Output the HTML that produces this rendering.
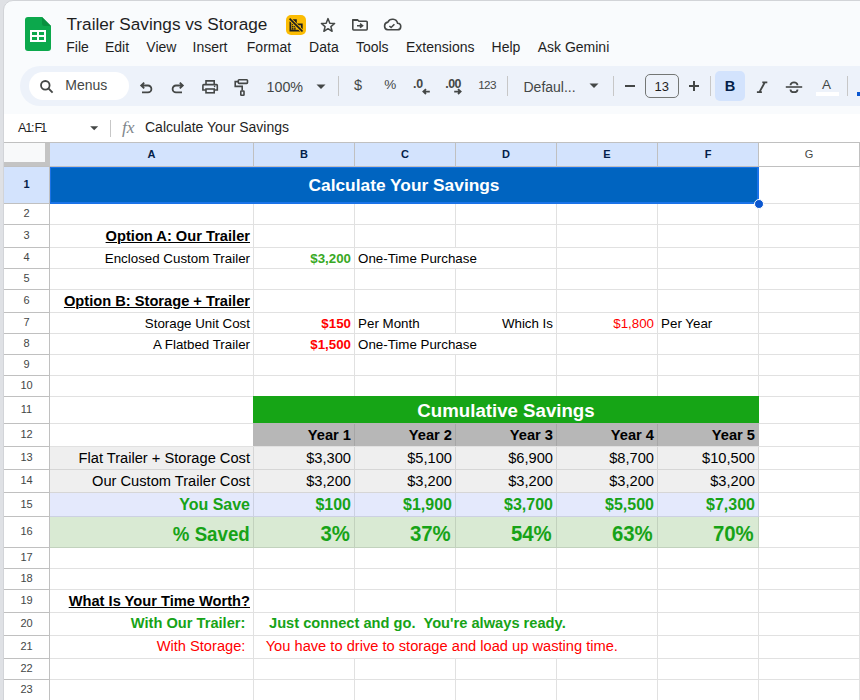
<!DOCTYPE html>
<html><head><meta charset="utf-8"><style>
html,body{margin:0;padding:0;}
body{width:860px;height:700px;overflow:hidden;position:relative;font-family:"Liberation Sans", sans-serif;}
body div{position:absolute;}
.t{white-space:pre;line-height:1;}
</style></head><body>
<div style="left:0px;top:0px;width:860px;height:700px;background:#dfe1e5;"></div><div style="left:3px;top:0px;width:900px;height:800px;background:#f9fbfd;box-sizing:border-box;border:1px solid #d2d4d8;border-top-left-radius:10px;"></div><svg style="position:absolute;left:25px;top:17px" width="26" height="34" viewBox="0 0 26 34"><path d="M3 0H17L26 9V31A3 3 0 0 1 23 34H3A3 3 0 0 1 0 31V3A3 3 0 0 1 3 0Z" fill="#0ca84c"/><path d="M17 0L26 9H19.5A2.5 2.5 0 0 1 17 6.5Z" fill="#08903f"/><rect x="5" y="13" width="16" height="12" fill="#fff"/><rect x="7" y="15" width="5" height="3" fill="#0ca84c"/><rect x="14" y="15" width="5" height="3" fill="#0ca84c"/><rect x="7" y="20" width="5" height="3" fill="#0ca84c"/><rect x="14" y="20" width="5" height="3" fill="#0ca84c"/></svg><div class="t" style="left:66.5px;top:16.17px;font-size:17.2px;color:#1f1f1f;font-weight:400;">Trailer Savings vs Storage</div><div class="t" style="left:66.3px;top:39.96px;font-size:14px;color:#1f1f1f;font-weight:400;">File</div><div class="t" style="left:105px;top:39.96px;font-size:14px;color:#1f1f1f;font-weight:400;">Edit</div><div class="t" style="left:146.3px;top:39.96px;font-size:14px;color:#1f1f1f;font-weight:400;">View</div><div class="t" style="left:192.5px;top:39.96px;font-size:14px;color:#1f1f1f;font-weight:400;">Insert</div><div class="t" style="left:246.8px;top:39.96px;font-size:14px;color:#1f1f1f;font-weight:400;">Format</div><div class="t" style="left:309.1px;top:39.96px;font-size:14px;color:#1f1f1f;font-weight:400;">Data</div><div class="t" style="left:355.9px;top:39.96px;font-size:14px;color:#1f1f1f;font-weight:400;">Tools</div><div class="t" style="left:406px;top:39.96px;font-size:14px;color:#1f1f1f;font-weight:400;">Extensions</div><div class="t" style="left:491.6px;top:39.96px;font-size:14px;color:#1f1f1f;font-weight:400;">Help</div><div class="t" style="left:537.7px;top:39.96px;font-size:14px;color:#1f1f1f;font-weight:400;">Ask Gemini</div><div style="left:286px;top:15px;width:20px;height:20px;background:#fbbc04;border-radius:5px;"></div><svg style="position:absolute;left:289px;top:18px" width="14" height="14" viewBox="0 0 14 14"><path d="M1.4 3.6V12.7H12.8V6.3H6.9V2.1H3.2" fill="none" stroke="#1f1f1f" stroke-width="1.8"/><g fill="#1f1f1f"><rect x="2.9" y="5.6" width="1.6" height="1.6"/><rect x="5.1" y="5.6" width="1.6" height="1.6"/><rect x="2.9" y="7.9" width="1.6" height="1.6"/><rect x="5.1" y="7.9" width="1.6" height="1.6"/><rect x="2.9" y="10.1" width="1.6" height="1.6"/><rect x="5.1" y="10.1" width="1.6" height="1.6"/><rect x="8.8" y="7.9" width="1.6" height="1.6"/></g><path d="M0.6 0.6L13.4 13.4" stroke="#fbbc04" stroke-width="3.4"/><path d="M0.6 0.6L13.4 13.4" stroke="#1f1f1f" stroke-width="1.7"/></svg><svg style="position:absolute;left:319px;top:16px" width="18" height="18" viewBox="0 0 18 18"><path d="M9 2.6L10.8 7.2L15.6 7.5L11.9 10.6L13.1 15.3L9 12.7L4.9 15.3L6.1 10.6L2.4 7.5L7.2 7.2Z" fill="none" stroke="#444746" stroke-width="1.5" stroke-linejoin="round"/></svg><svg style="position:absolute;left:351px;top:18px" width="18" height="14" viewBox="0 0 18 14"><path d="M1.8 1.8H6.5L8 3.3H15.3A0.9 0.9 0 0 1 16.2 4.2V11.1A0.9 0.9 0 0 1 15.3 12H2.7A0.9 0.9 0 0 1 1.8 11.1Z" fill="none" stroke="#444746" stroke-width="1.6" stroke-linejoin="round"/><path d="M1.8 1.5H6.6L8 3H1.8Z" fill="#444746"/><path d="M6 7.7H10.5M9 5.7L11.5 7.7L9 9.7" fill="none" stroke="#444746" stroke-width="1.6"/></svg><svg style="position:absolute;left:382px;top:17px" width="20" height="15" viewBox="0 0 20 15"><path d="M5.8 12.8H15.3A3.3 3.3 0 0 0 15.6 6.2A5.2 5.2 0 0 0 5.9 5.1A3.9 3.9 0 0 0 5.8 12.8Z" fill="none" stroke="#444746" stroke-width="1.6"/><path d="M7.4 9L9.1 10.5L12.4 7.2" fill="none" stroke="#444746" stroke-width="1.6"/></svg><div style="left:20px;top:66px;width:900px;height:40px;background:#edf2fa;border-radius:20px;"></div><div style="left:29px;top:72px;width:100px;height:28px;background:#ffffff;border-radius:14px;"></div><svg style="position:absolute;left:38px;top:78px" width="18" height="18" viewBox="0 0 18 18"><circle cx="7.3" cy="7.3" r="4.3" fill="none" stroke="#444746" stroke-width="1.8"/><path d="M10.4 10.4L14.6 14.6" stroke="#444746" stroke-width="1.9"/></svg><div class="t" style="left:65.3px;top:77.66px;font-size:14px;color:#444746;font-weight:400;">Menus</div><svg style="position:absolute;left:138px;top:80px" width="16" height="16" viewBox="0 0 16 16"><path d="M6.2 2.6L3.2 5.5L6.2 8.4M3.2 5.5H10A3.4 3.4 0 0 1 10 12.3H4" fill="none" stroke="#444746" stroke-width="1.8"/></svg><svg style="position:absolute;left:170px;top:80px" width="16" height="16" viewBox="0 0 16 16"><path d="M9.8 2.6L12.8 5.5L9.8 8.4M12.8 5.5H6A3.4 3.4 0 0 0 6 12.3H12" fill="none" stroke="#444746" stroke-width="1.8"/></svg><svg style="position:absolute;left:200px;top:78px" width="20" height="18" viewBox="0 0 20 18"><path d="M6 6.6V2.9H14.2V6.6" fill="none" stroke="#444746" stroke-width="1.6"/><path d="M6 12H2.9V7.4A0.8 0.8 0 0 1 3.7 6.6H16.5A0.8 0.8 0 0 1 17.3 7.4V12H14.2" fill="none" stroke="#444746" stroke-width="1.6"/><rect x="6" y="11" width="8.2" height="3.8" fill="none" stroke="#444746" stroke-width="1.6"/><circle cx="14.6" cy="8.4" r="0.8" fill="#444746"/></svg><svg style="position:absolute;left:232px;top:77px" width="18" height="20" viewBox="0 0 18 20"><rect x="6.3" y="2.8" width="9.2" height="3.6" rx="0.8" fill="none" stroke="#444746" stroke-width="1.6"/><path d="M6.3 4.6H3.2V9.4H10.2V13.4" fill="none" stroke="#444746" stroke-width="1.6"/><rect x="8.8" y="14" width="3.2" height="4.3" rx="0.6" fill="none" stroke="#444746" stroke-width="1.6"/></svg><div class="t" style="left:266.5px;top:80.42px;font-size:14.3px;color:#444746;font-weight:400;">100%</div><svg style="position:absolute;left:316px;top:84px" width="10" height="6" viewBox="0 0 10 6"><path d="M0.5 0.5H9.5L5 5Z" fill="#444746"/></svg><div style="left:338px;top:76px;width:1px;height:20px;background:#c7c7c7;"></div><div class="t" style="left:354px;top:78.45px;font-size:14.5px;color:#444746;font-weight:400;">$</div><div class="t" style="left:384.3px;top:78.06px;font-size:13.5px;color:#444746;font-weight:400;">%</div><div class="t" style="left:413px;top:78.16px;font-size:12.4px;color:#444746;font-weight:700;letter-spacing:-0.2px;">.0</div><svg style="position:absolute;left:421px;top:88px" width="10" height="7" viewBox="0 0 10 7"><path d="M8.8 3.6H3M5 1.2L2.4 3.6L5 6" fill="none" stroke="#444746" stroke-width="1.8"/></svg><div class="t" style="left:445.3px;top:78.16px;font-size:12.4px;color:#444746;font-weight:700;letter-spacing:-0.6px;">.00</div><svg style="position:absolute;left:453px;top:88px" width="10" height="7" viewBox="0 0 10 7"><path d="M1.2 3.6H7M5 1.2L7.6 3.6L5 6" fill="none" stroke="#444746" stroke-width="1.8"/></svg><div class="t" style="left:478.3px;top:79.12px;font-size:11.7px;color:#444746;font-weight:400;letter-spacing:-0.7px;">123</div><div style="left:507px;top:76px;width:1px;height:20px;background:#c7c7c7;"></div><div class="t" style="left:523.5px;top:79.66px;font-size:14px;color:#444746;font-weight:400;">Defaul...</div><svg style="position:absolute;left:589px;top:83px" width="10" height="6" viewBox="0 0 10 6"><path d="M0.5 0.5H9.5L5 5Z" fill="#444746"/></svg><div style="left:613px;top:76px;width:1px;height:20px;background:#c7c7c7;"></div><div style="left:625px;top:85px;width:10px;height:1.8px;background:#444746;"></div><div style="left:645px;top:74px;width:34px;height:24px;background:transparent;box-sizing:border-box;border:1.3px solid #747775;border-radius:5px;"></div><div class="t" style="left:61.799999999999955px;width:1200px;text-align:center;top:80.07px;font-size:13px;color:#1f1f1f;font-weight:400;">13</div><div style="left:688.8px;top:85.2px;width:10.2px;height:1.8px;background:#444746;"></div><div style="left:693px;top:81px;width:1.8px;height:10.2px;background:#444746;"></div><div style="left:710px;top:76px;width:1px;height:20px;background:#c7c7c7;"></div><div style="left:715px;top:71px;width:30px;height:30px;background:#d3e3fd;border-radius:5px;"></div><div class="t" style="left:130px;width:1200px;text-align:center;top:79.37px;font-size:14.6px;color:#041e49;font-weight:700;">B</div><svg style="position:absolute;left:755px;top:80px" width="14" height="14" viewBox="0 0 14 14"><path d="M7.3 2.4H12.3M1.9 12.1H6.9M9.8 2.4L4.4 12.1" fill="none" stroke="#444746" stroke-width="1.9"/></svg><svg style="position:absolute;left:784px;top:79.5px" width="20" height="15" viewBox="0 0 20 15"><path d="M1.8 7H18.2" stroke="#444746" stroke-width="1.6"/><path d="M6.5 5.3A3.5 3 0 0 1 13.5 5.3" fill="none" stroke="#444746" stroke-width="1.8"/><path d="M6.5 9.4A3.5 2.8 0 0 0 13.5 9.4" fill="none" stroke="#444746" stroke-width="1.8"/></svg><div class="t" style="left:226.5px;width:1200px;text-align:center;top:78.06px;font-size:13.5px;color:#444746;font-weight:400;">A</div><div style="left:816px;top:92px;width:23px;height:4px;background:#ffffff;"></div><div style="left:847px;top:76px;width:1px;height:20px;background:#c7c7c7;"></div><div style="left:857px;top:92px;width:3px;height:4px;background:#0b57d0;"></div><div style="left:4px;top:114px;width:856px;height:28px;background:#ffffff;"></div><div class="t" style="left:18.1px;top:121.59px;font-size:12.6px;color:#1f1f1f;font-weight:400;">A</div><div class="t" style="left:25.2px;top:121.59px;font-size:12.6px;color:#1f1f1f;font-weight:400;">1</div><div class="t" style="left:30.9px;top:121.59px;font-size:12.6px;color:#1f1f1f;font-weight:400;">:</div><div class="t" style="left:34.6px;top:121.59px;font-size:12.6px;color:#1f1f1f;font-weight:400;">F</div><div class="t" style="left:40.2px;top:121.59px;font-size:12.6px;color:#1f1f1f;font-weight:400;">1</div><svg style="position:absolute;left:90px;top:126px" width="9" height="5" viewBox="0 0 9 5"><path d="M0.2 0.2H8.2L4.2 4.2Z" fill="#444746"/></svg><div style="left:110px;top:120px;width:1px;height:17px;background:#c7c7c7;"></div><div class="t" style="left:122px;top:119.13px;font-size:17.5px;color:#80868b;font-weight:400;font-family:'Liberation Serif',serif;letter-spacing:0px;"><i>fx</i></div><div class="t" style="left:145px;top:120.46px;font-size:14px;color:#1f1f1f;font-weight:400;">Calculate Your Savings</div><div style="left:4px;top:142px;width:856px;height:558px;background:#ffffff;"></div><div style="left:4px;top:142px;width:856px;height:1px;background:#c0c0c0;"></div><div style="left:50px;top:143px;width:708px;height:23px;background:#d3e3fd;"></div><div style="left:4px;top:143px;width:41px;height:19px;background:#f8f9fa;"></div><div style="left:45px;top:143px;width:5px;height:24px;background:#c4c4c4;"></div><div style="left:4px;top:162px;width:45px;height:5px;background:#c4c4c4;"></div><div style="left:4px;top:166px;width:856px;height:1px;background:#c0c0c0;"></div><div class="t" style="left:-448.5px;width:1200px;text-align:center;top:149.09px;font-size:11px;color:#041e49;font-weight:700;">A</div><div class="t" style="left:-296.0px;width:1200px;text-align:center;top:149.09px;font-size:11px;color:#041e49;font-weight:700;">B</div><div class="t" style="left:-195.0px;width:1200px;text-align:center;top:149.09px;font-size:11px;color:#041e49;font-weight:700;">C</div><div class="t" style="left:-94.0px;width:1200px;text-align:center;top:149.09px;font-size:11px;color:#041e49;font-weight:700;">D</div><div class="t" style="left:7.0px;width:1200px;text-align:center;top:149.09px;font-size:11px;color:#041e49;font-weight:700;">E</div><div class="t" style="left:108.0px;width:1200px;text-align:center;top:149.09px;font-size:11px;color:#041e49;font-weight:700;">F</div><div class="t" style="left:209.0px;width:1200px;text-align:center;top:149.09px;font-size:11px;color:#444746;font-weight:400;">G</div><div style="left:253px;top:143px;width:1px;height:23px;background:#c0c0c0;"></div><div style="left:354px;top:143px;width:1px;height:23px;background:#c0c0c0;"></div><div style="left:455px;top:143px;width:1px;height:23px;background:#c0c0c0;"></div><div style="left:556px;top:143px;width:1px;height:23px;background:#c0c0c0;"></div><div style="left:657px;top:143px;width:1px;height:23px;background:#c0c0c0;"></div><div style="left:758px;top:143px;width:1px;height:23px;background:#c0c0c0;"></div><div style="left:859px;top:143px;width:1px;height:23px;background:#c0c0c0;"></div><div style="left:4px;top:167px;width:45px;height:36px;background:#d3e3fd;"></div><div style="left:49px;top:167px;width:1px;height:533px;background:#c0c0c0;"></div><div style="left:4px;top:203px;width:45px;height:1px;background:#c0c0c0;"></div><div class="t" style="left:-573.5px;width:1200px;text-align:center;top:179.39px;font-size:11px;color:#041e49;font-weight:700;">1</div><div style="left:4px;top:224px;width:45px;height:1px;background:#c0c0c0;"></div><div class="t" style="left:-573.5px;width:1200px;text-align:center;top:208.39px;font-size:11px;color:#444746;font-weight:400;">2</div><div style="left:4px;top:247px;width:45px;height:1px;background:#c0c0c0;"></div><div class="t" style="left:-573.5px;width:1200px;text-align:center;top:230.39px;font-size:11px;color:#444746;font-weight:400;">3</div><div style="left:4px;top:268px;width:45px;height:1px;background:#c0c0c0;"></div><div class="t" style="left:-573.5px;width:1200px;text-align:center;top:252.39px;font-size:11px;color:#444746;font-weight:400;">4</div><div style="left:4px;top:289px;width:45px;height:1px;background:#c0c0c0;"></div><div class="t" style="left:-573.5px;width:1200px;text-align:center;top:273.39px;font-size:11px;color:#444746;font-weight:400;">5</div><div style="left:4px;top:312px;width:45px;height:1px;background:#c0c0c0;"></div><div class="t" style="left:-573.5px;width:1200px;text-align:center;top:295.39px;font-size:11px;color:#444746;font-weight:400;">6</div><div style="left:4px;top:333px;width:45px;height:1px;background:#c0c0c0;"></div><div class="t" style="left:-573.5px;width:1200px;text-align:center;top:317.39px;font-size:11px;color:#444746;font-weight:400;">7</div><div style="left:4px;top:354px;width:45px;height:1px;background:#c0c0c0;"></div><div class="t" style="left:-573.5px;width:1200px;text-align:center;top:338.39px;font-size:11px;color:#444746;font-weight:400;">8</div><div style="left:4px;top:375px;width:45px;height:1px;background:#c0c0c0;"></div><div class="t" style="left:-573.5px;width:1200px;text-align:center;top:359.39px;font-size:11px;color:#444746;font-weight:400;">9</div><div style="left:4px;top:396px;width:45px;height:1px;background:#c0c0c0;"></div><div class="t" style="left:-573.5px;width:1200px;text-align:center;top:380.39px;font-size:11px;color:#444746;font-weight:400;">10</div><div style="left:4px;top:423px;width:45px;height:1px;background:#c0c0c0;"></div><div class="t" style="left:-573.5px;width:1200px;text-align:center;top:404.39px;font-size:11px;color:#444746;font-weight:400;">11</div><div style="left:4px;top:446px;width:45px;height:1px;background:#c0c0c0;"></div><div class="t" style="left:-573.5px;width:1200px;text-align:center;top:429.39px;font-size:11px;color:#444746;font-weight:400;">12</div><div style="left:4px;top:469px;width:45px;height:1px;background:#c0c0c0;"></div><div class="t" style="left:-573.5px;width:1200px;text-align:center;top:452.39px;font-size:11px;color:#444746;font-weight:400;">13</div><div style="left:4px;top:492px;width:45px;height:1px;background:#c0c0c0;"></div><div class="t" style="left:-573.5px;width:1200px;text-align:center;top:475.39px;font-size:11px;color:#444746;font-weight:400;">14</div><div style="left:4px;top:516px;width:45px;height:1px;background:#c0c0c0;"></div><div class="t" style="left:-573.5px;width:1200px;text-align:center;top:498.89px;font-size:11px;color:#444746;font-weight:400;">15</div><div style="left:4px;top:547px;width:45px;height:1px;background:#c0c0c0;"></div><div class="t" style="left:-573.5px;width:1200px;text-align:center;top:526.39px;font-size:11px;color:#444746;font-weight:400;">16</div><div style="left:4px;top:568px;width:45px;height:1px;background:#c0c0c0;"></div><div class="t" style="left:-573.5px;width:1200px;text-align:center;top:552.39px;font-size:11px;color:#444746;font-weight:400;">17</div><div style="left:4px;top:589px;width:45px;height:1px;background:#c0c0c0;"></div><div class="t" style="left:-573.5px;width:1200px;text-align:center;top:573.39px;font-size:11px;color:#444746;font-weight:400;">18</div><div style="left:4px;top:612px;width:45px;height:1px;background:#c0c0c0;"></div><div class="t" style="left:-573.5px;width:1200px;text-align:center;top:595.39px;font-size:11px;color:#444746;font-weight:400;">19</div><div style="left:4px;top:635px;width:45px;height:1px;background:#c0c0c0;"></div><div class="t" style="left:-573.5px;width:1200px;text-align:center;top:618.39px;font-size:11px;color:#444746;font-weight:400;">20</div><div style="left:4px;top:658px;width:45px;height:1px;background:#c0c0c0;"></div><div class="t" style="left:-573.5px;width:1200px;text-align:center;top:641.39px;font-size:11px;color:#444746;font-weight:400;">21</div><div style="left:4px;top:679px;width:45px;height:1px;background:#c0c0c0;"></div><div class="t" style="left:-573.5px;width:1200px;text-align:center;top:663.39px;font-size:11px;color:#444746;font-weight:400;">22</div><div style="left:4px;top:700px;width:45px;height:1px;background:#c0c0c0;"></div><div class="t" style="left:-573.5px;width:1200px;text-align:center;top:684.39px;font-size:11px;color:#444746;font-weight:400;">23</div><div style="left:50px;top:167px;width:708px;height:36px;background:#0064c0;"></div><div style="left:253px;top:396px;width:506px;height:27px;background:#16a516;"></div><div style="left:253px;top:423px;width:506px;height:23px;background:#b7b7b7;"></div><div style="left:50px;top:447px;width:709px;height:23px;background:#efefef;"></div><div style="left:50px;top:470px;width:709px;height:23px;background:#efefef;"></div><div style="left:50px;top:493px;width:709px;height:24px;background:#e4e9fc;"></div><div style="left:50px;top:517px;width:709px;height:31px;background:#d9ead3;"></div><div style="left:758px;top:203px;width:102px;height:1px;background:#e1e1e1;"></div><div style="left:50px;top:224px;width:810px;height:1px;background:#e1e1e1;"></div><div style="left:50px;top:247px;width:810px;height:1px;background:#e1e1e1;"></div><div style="left:50px;top:268px;width:810px;height:1px;background:#e1e1e1;"></div><div style="left:50px;top:289px;width:810px;height:1px;background:#e1e1e1;"></div><div style="left:50px;top:312px;width:810px;height:1px;background:#e1e1e1;"></div><div style="left:50px;top:333px;width:810px;height:1px;background:#e1e1e1;"></div><div style="left:50px;top:354px;width:810px;height:1px;background:#e1e1e1;"></div><div style="left:50px;top:375px;width:810px;height:1px;background:#e1e1e1;"></div><div style="left:50px;top:396px;width:203px;height:1px;background:#e1e1e1;"></div><div style="left:759px;top:396px;width:101px;height:1px;background:#e1e1e1;"></div><div style="left:50px;top:423px;width:203px;height:1px;background:#e1e1e1;"></div><div style="left:759px;top:423px;width:101px;height:1px;background:#e1e1e1;"></div><div style="left:50px;top:446px;width:709px;height:1px;background:#e1e1e1;"></div><div style="left:759px;top:446px;width:101px;height:1px;background:#e1e1e1;"></div><div style="left:50px;top:469px;width:709px;height:1px;background:rgba(0,0,0,0.1);"></div><div style="left:759px;top:469px;width:101px;height:1px;background:#e1e1e1;"></div><div style="left:50px;top:492px;width:709px;height:1px;background:rgba(0,0,0,0.1);"></div><div style="left:759px;top:492px;width:101px;height:1px;background:#e1e1e1;"></div><div style="left:50px;top:516px;width:709px;height:1px;background:rgba(0,0,0,0.1);"></div><div style="left:759px;top:516px;width:101px;height:1px;background:#e1e1e1;"></div><div style="left:50px;top:547px;width:709px;height:1px;background:rgba(0,0,0,0.1);"></div><div style="left:759px;top:547px;width:101px;height:1px;background:#e1e1e1;"></div><div style="left:50px;top:568px;width:810px;height:1px;background:#e1e1e1;"></div><div style="left:50px;top:589px;width:810px;height:1px;background:#e1e1e1;"></div><div style="left:50px;top:612px;width:810px;height:1px;background:#e1e1e1;"></div><div style="left:50px;top:635px;width:810px;height:1px;background:#e1e1e1;"></div><div style="left:50px;top:658px;width:810px;height:1px;background:#e1e1e1;"></div><div style="left:50px;top:679px;width:810px;height:1px;background:#e1e1e1;"></div><div style="left:859px;top:167px;width:1px;height:36px;background:#e1e1e1;"></div><div style="left:253px;top:204px;width:1px;height:20px;background:#e1e1e1;"></div><div style="left:354px;top:204px;width:1px;height:20px;background:#e1e1e1;"></div><div style="left:455px;top:204px;width:1px;height:20px;background:#e1e1e1;"></div><div style="left:556px;top:204px;width:1px;height:20px;background:#e1e1e1;"></div><div style="left:657px;top:204px;width:1px;height:20px;background:#e1e1e1;"></div><div style="left:758px;top:204px;width:1px;height:20px;background:#e1e1e1;"></div><div style="left:859px;top:204px;width:1px;height:20px;background:#e1e1e1;"></div><div style="left:253px;top:225px;width:1px;height:22px;background:#e1e1e1;"></div><div style="left:354px;top:225px;width:1px;height:22px;background:#e1e1e1;"></div><div style="left:455px;top:225px;width:1px;height:22px;background:#e1e1e1;"></div><div style="left:556px;top:225px;width:1px;height:22px;background:#e1e1e1;"></div><div style="left:657px;top:225px;width:1px;height:22px;background:#e1e1e1;"></div><div style="left:758px;top:225px;width:1px;height:22px;background:#e1e1e1;"></div><div style="left:859px;top:225px;width:1px;height:22px;background:#e1e1e1;"></div><div style="left:253px;top:248px;width:1px;height:20px;background:#e1e1e1;"></div><div style="left:354px;top:248px;width:1px;height:20px;background:#e1e1e1;"></div><div style="left:556px;top:248px;width:1px;height:20px;background:#e1e1e1;"></div><div style="left:657px;top:248px;width:1px;height:20px;background:#e1e1e1;"></div><div style="left:758px;top:248px;width:1px;height:20px;background:#e1e1e1;"></div><div style="left:859px;top:248px;width:1px;height:20px;background:#e1e1e1;"></div><div style="left:253px;top:269px;width:1px;height:20px;background:#e1e1e1;"></div><div style="left:354px;top:269px;width:1px;height:20px;background:#e1e1e1;"></div><div style="left:455px;top:269px;width:1px;height:20px;background:#e1e1e1;"></div><div style="left:556px;top:269px;width:1px;height:20px;background:#e1e1e1;"></div><div style="left:657px;top:269px;width:1px;height:20px;background:#e1e1e1;"></div><div style="left:758px;top:269px;width:1px;height:20px;background:#e1e1e1;"></div><div style="left:859px;top:269px;width:1px;height:20px;background:#e1e1e1;"></div><div style="left:253px;top:290px;width:1px;height:22px;background:#e1e1e1;"></div><div style="left:354px;top:290px;width:1px;height:22px;background:#e1e1e1;"></div><div style="left:455px;top:290px;width:1px;height:22px;background:#e1e1e1;"></div><div style="left:556px;top:290px;width:1px;height:22px;background:#e1e1e1;"></div><div style="left:657px;top:290px;width:1px;height:22px;background:#e1e1e1;"></div><div style="left:758px;top:290px;width:1px;height:22px;background:#e1e1e1;"></div><div style="left:859px;top:290px;width:1px;height:22px;background:#e1e1e1;"></div><div style="left:253px;top:313px;width:1px;height:20px;background:#e1e1e1;"></div><div style="left:354px;top:313px;width:1px;height:20px;background:#e1e1e1;"></div><div style="left:455px;top:313px;width:1px;height:20px;background:#e1e1e1;"></div><div style="left:556px;top:313px;width:1px;height:20px;background:#e1e1e1;"></div><div style="left:657px;top:313px;width:1px;height:20px;background:#e1e1e1;"></div><div style="left:758px;top:313px;width:1px;height:20px;background:#e1e1e1;"></div><div style="left:859px;top:313px;width:1px;height:20px;background:#e1e1e1;"></div><div style="left:253px;top:334px;width:1px;height:20px;background:#e1e1e1;"></div><div style="left:354px;top:334px;width:1px;height:20px;background:#e1e1e1;"></div><div style="left:556px;top:334px;width:1px;height:20px;background:#e1e1e1;"></div><div style="left:657px;top:334px;width:1px;height:20px;background:#e1e1e1;"></div><div style="left:758px;top:334px;width:1px;height:20px;background:#e1e1e1;"></div><div style="left:859px;top:334px;width:1px;height:20px;background:#e1e1e1;"></div><div style="left:253px;top:355px;width:1px;height:20px;background:#e1e1e1;"></div><div style="left:354px;top:355px;width:1px;height:20px;background:#e1e1e1;"></div><div style="left:455px;top:355px;width:1px;height:20px;background:#e1e1e1;"></div><div style="left:556px;top:355px;width:1px;height:20px;background:#e1e1e1;"></div><div style="left:657px;top:355px;width:1px;height:20px;background:#e1e1e1;"></div><div style="left:758px;top:355px;width:1px;height:20px;background:#e1e1e1;"></div><div style="left:859px;top:355px;width:1px;height:20px;background:#e1e1e1;"></div><div style="left:253px;top:376px;width:1px;height:20px;background:#e1e1e1;"></div><div style="left:354px;top:376px;width:1px;height:20px;background:#e1e1e1;"></div><div style="left:455px;top:376px;width:1px;height:20px;background:#e1e1e1;"></div><div style="left:556px;top:376px;width:1px;height:20px;background:#e1e1e1;"></div><div style="left:657px;top:376px;width:1px;height:20px;background:#e1e1e1;"></div><div style="left:758px;top:376px;width:1px;height:20px;background:#e1e1e1;"></div><div style="left:859px;top:376px;width:1px;height:20px;background:#e1e1e1;"></div><div style="left:859px;top:397px;width:1px;height:26px;background:#e1e1e1;"></div><div style="left:354px;top:424px;width:1px;height:22px;background:rgba(0,0,0,0.09);"></div><div style="left:455px;top:424px;width:1px;height:22px;background:rgba(0,0,0,0.09);"></div><div style="left:556px;top:424px;width:1px;height:22px;background:rgba(0,0,0,0.09);"></div><div style="left:657px;top:424px;width:1px;height:22px;background:rgba(0,0,0,0.09);"></div><div style="left:859px;top:424px;width:1px;height:22px;background:rgba(0,0,0,0.09);"></div><div style="left:253px;top:447px;width:1px;height:22px;background:rgba(0,0,0,0.1);"></div><div style="left:354px;top:447px;width:1px;height:22px;background:rgba(0,0,0,0.1);"></div><div style="left:455px;top:447px;width:1px;height:22px;background:rgba(0,0,0,0.1);"></div><div style="left:556px;top:447px;width:1px;height:22px;background:rgba(0,0,0,0.1);"></div><div style="left:657px;top:447px;width:1px;height:22px;background:rgba(0,0,0,0.1);"></div><div style="left:758px;top:447px;width:1px;height:22px;background:rgba(0,0,0,0.1);"></div><div style="left:859px;top:447px;width:1px;height:22px;background:#e1e1e1;"></div><div style="left:253px;top:470px;width:1px;height:22px;background:rgba(0,0,0,0.1);"></div><div style="left:354px;top:470px;width:1px;height:22px;background:rgba(0,0,0,0.1);"></div><div style="left:455px;top:470px;width:1px;height:22px;background:rgba(0,0,0,0.1);"></div><div style="left:556px;top:470px;width:1px;height:22px;background:rgba(0,0,0,0.1);"></div><div style="left:657px;top:470px;width:1px;height:22px;background:rgba(0,0,0,0.1);"></div><div style="left:758px;top:470px;width:1px;height:22px;background:rgba(0,0,0,0.1);"></div><div style="left:859px;top:470px;width:1px;height:22px;background:#e1e1e1;"></div><div style="left:253px;top:493px;width:1px;height:23px;background:rgba(0,0,0,0.1);"></div><div style="left:354px;top:493px;width:1px;height:23px;background:rgba(0,0,0,0.1);"></div><div style="left:455px;top:493px;width:1px;height:23px;background:rgba(0,0,0,0.1);"></div><div style="left:556px;top:493px;width:1px;height:23px;background:rgba(0,0,0,0.1);"></div><div style="left:657px;top:493px;width:1px;height:23px;background:rgba(0,0,0,0.1);"></div><div style="left:758px;top:493px;width:1px;height:23px;background:rgba(0,0,0,0.1);"></div><div style="left:859px;top:493px;width:1px;height:23px;background:#e1e1e1;"></div><div style="left:253px;top:517px;width:1px;height:30px;background:rgba(0,0,0,0.1);"></div><div style="left:354px;top:517px;width:1px;height:30px;background:rgba(0,0,0,0.1);"></div><div style="left:455px;top:517px;width:1px;height:30px;background:rgba(0,0,0,0.1);"></div><div style="left:556px;top:517px;width:1px;height:30px;background:rgba(0,0,0,0.1);"></div><div style="left:657px;top:517px;width:1px;height:30px;background:rgba(0,0,0,0.1);"></div><div style="left:758px;top:517px;width:1px;height:30px;background:rgba(0,0,0,0.1);"></div><div style="left:859px;top:517px;width:1px;height:30px;background:#e1e1e1;"></div><div style="left:253px;top:548px;width:1px;height:20px;background:#e1e1e1;"></div><div style="left:354px;top:548px;width:1px;height:20px;background:#e1e1e1;"></div><div style="left:455px;top:548px;width:1px;height:20px;background:#e1e1e1;"></div><div style="left:556px;top:548px;width:1px;height:20px;background:#e1e1e1;"></div><div style="left:657px;top:548px;width:1px;height:20px;background:#e1e1e1;"></div><div style="left:758px;top:548px;width:1px;height:20px;background:#e1e1e1;"></div><div style="left:859px;top:548px;width:1px;height:20px;background:#e1e1e1;"></div><div style="left:253px;top:569px;width:1px;height:20px;background:#e1e1e1;"></div><div style="left:354px;top:569px;width:1px;height:20px;background:#e1e1e1;"></div><div style="left:455px;top:569px;width:1px;height:20px;background:#e1e1e1;"></div><div style="left:556px;top:569px;width:1px;height:20px;background:#e1e1e1;"></div><div style="left:657px;top:569px;width:1px;height:20px;background:#e1e1e1;"></div><div style="left:758px;top:569px;width:1px;height:20px;background:#e1e1e1;"></div><div style="left:859px;top:569px;width:1px;height:20px;background:#e1e1e1;"></div><div style="left:253px;top:590px;width:1px;height:22px;background:#e1e1e1;"></div><div style="left:354px;top:590px;width:1px;height:22px;background:#e1e1e1;"></div><div style="left:455px;top:590px;width:1px;height:22px;background:#e1e1e1;"></div><div style="left:556px;top:590px;width:1px;height:22px;background:#e1e1e1;"></div><div style="left:657px;top:590px;width:1px;height:22px;background:#e1e1e1;"></div><div style="left:758px;top:590px;width:1px;height:22px;background:#e1e1e1;"></div><div style="left:859px;top:590px;width:1px;height:22px;background:#e1e1e1;"></div><div style="left:253px;top:613px;width:1px;height:22px;background:#e1e1e1;"></div><div style="left:657px;top:613px;width:1px;height:22px;background:#e1e1e1;"></div><div style="left:758px;top:613px;width:1px;height:22px;background:#e1e1e1;"></div><div style="left:859px;top:613px;width:1px;height:22px;background:#e1e1e1;"></div><div style="left:253px;top:636px;width:1px;height:22px;background:#e1e1e1;"></div><div style="left:657px;top:636px;width:1px;height:22px;background:#e1e1e1;"></div><div style="left:758px;top:636px;width:1px;height:22px;background:#e1e1e1;"></div><div style="left:859px;top:636px;width:1px;height:22px;background:#e1e1e1;"></div><div style="left:253px;top:659px;width:1px;height:20px;background:#e1e1e1;"></div><div style="left:354px;top:659px;width:1px;height:20px;background:#e1e1e1;"></div><div style="left:455px;top:659px;width:1px;height:20px;background:#e1e1e1;"></div><div style="left:556px;top:659px;width:1px;height:20px;background:#e1e1e1;"></div><div style="left:657px;top:659px;width:1px;height:20px;background:#e1e1e1;"></div><div style="left:758px;top:659px;width:1px;height:20px;background:#e1e1e1;"></div><div style="left:859px;top:659px;width:1px;height:20px;background:#e1e1e1;"></div><div style="left:253px;top:680px;width:1px;height:20px;background:#e1e1e1;"></div><div style="left:354px;top:680px;width:1px;height:20px;background:#e1e1e1;"></div><div style="left:455px;top:680px;width:1px;height:20px;background:#e1e1e1;"></div><div style="left:556px;top:680px;width:1px;height:20px;background:#e1e1e1;"></div><div style="left:657px;top:680px;width:1px;height:20px;background:#e1e1e1;"></div><div style="left:758px;top:680px;width:1px;height:20px;background:#e1e1e1;"></div><div style="left:859px;top:680px;width:1px;height:20px;background:#e1e1e1;"></div><div class="t" style="left:-196px;width:1200px;text-align:center;top:176.96px;font-size:17.33px;color:#ffffff;font-weight:700;">Calculate Your Savings</div><div class="t" style="right:610px;text-align:right;top:229.02px;font-size:14.67px;color:#000000;font-weight:700;text-decoration:underline;text-decoration-thickness:1.2px;text-underline-offset:0.9px;">Option A: Our Trailer</div><div class="t" style="right:610px;text-align:right;top:251.9px;font-size:13.33px;color:#000000;font-weight:400;">Enclosed Custom Trailer</div><div class="t" style="right:509px;text-align:right;top:251.9px;font-size:13.33px;color:#38a824;font-weight:700;">$3,200</div><div class="t" style="left:358.1px;top:251.9px;font-size:13.33px;color:#000000;font-weight:400;">One-Time Purchase</div><div class="t" style="right:610px;text-align:right;top:294.02px;font-size:14.67px;color:#000000;font-weight:700;text-decoration:underline;text-decoration-thickness:1.2px;text-underline-offset:0.9px;">Option B: Storage + Trailer</div><div class="t" style="right:610px;text-align:right;top:316.7px;font-size:13.33px;color:#000000;font-weight:400;">Storage Unit Cost</div><div class="t" style="right:509px;text-align:right;top:316.7px;font-size:13.33px;color:#ff0000;font-weight:700;">$150</div><div class="t" style="left:358.1px;top:316.7px;font-size:13.33px;color:#000000;font-weight:400;">Per Month</div><div class="t" style="right:307px;text-align:right;top:316.7px;font-size:13.33px;color:#000000;font-weight:400;">Which Is</div><div class="t" style="right:206px;text-align:right;top:316.7px;font-size:13.33px;color:#ff0000;font-weight:400;">$1,800</div><div class="t" style="left:661.1px;top:316.7px;font-size:13.33px;color:#000000;font-weight:400;">Per Year</div><div class="t" style="right:610px;text-align:right;top:337.7px;font-size:13.33px;color:#000000;font-weight:400;">A Flatbed Trailer</div><div class="t" style="right:509px;text-align:right;top:337.7px;font-size:13.33px;color:#ff0000;font-weight:700;">$1,500</div><div class="t" style="left:358.1px;top:337.7px;font-size:13.33px;color:#000000;font-weight:400;">One-Time Purchase</div><div class="t" style="left:-94px;width:1200px;text-align:center;top:401.58px;font-size:18.67px;color:#ffffff;font-weight:700;">Cumulative Savings</div><div class="t" style="right:509px;text-align:right;top:427.62px;font-size:14.67px;color:#000000;font-weight:700;">Year 1</div><div class="t" style="right:408px;text-align:right;top:427.62px;font-size:14.67px;color:#000000;font-weight:700;">Year 2</div><div class="t" style="right:307px;text-align:right;top:427.62px;font-size:14.67px;color:#000000;font-weight:700;">Year 3</div><div class="t" style="right:206px;text-align:right;top:427.62px;font-size:14.67px;color:#000000;font-weight:700;">Year 4</div><div class="t" style="right:105px;text-align:right;top:427.62px;font-size:14.67px;color:#000000;font-weight:700;">Year 5</div><div class="t" style="right:610px;text-align:right;top:450.82px;font-size:14.67px;color:#000000;font-weight:400;">Flat Trailer + Storage Cost</div><div class="t" style="right:610px;text-align:right;top:473.82px;font-size:14.67px;color:#000000;font-weight:400;">Our Custom Trailer Cost</div><div class="t" style="right:610px;text-align:right;top:496.84px;font-size:16px;color:#17a317;font-weight:700;">You Save</div><div class="t" style="right:610px;text-align:right;top:525.49px;font-size:19.4px;color:#17a317;font-weight:700;transform:scaleX(0.965);transform-origin:100% 0;">% Saved</div><div class="t" style="right:509px;text-align:right;top:450.82px;font-size:14.67px;color:#000000;font-weight:400;">$3,300</div><div class="t" style="right:509px;text-align:right;top:473.82px;font-size:14.67px;color:#000000;font-weight:400;">$3,200</div><div class="t" style="right:509px;text-align:right;top:496.84px;font-size:16px;color:#17a317;font-weight:700;">$100</div><div class="t" style="right:510.3px;text-align:right;top:523.52px;font-size:21.33px;color:#17a317;font-weight:700;transform:scaleX(0.955);transform-origin:100% 0;">3%</div><div class="t" style="right:408px;text-align:right;top:450.82px;font-size:14.67px;color:#000000;font-weight:400;">$5,100</div><div class="t" style="right:408px;text-align:right;top:473.82px;font-size:14.67px;color:#000000;font-weight:400;">$3,200</div><div class="t" style="right:408px;text-align:right;top:496.84px;font-size:16px;color:#17a317;font-weight:700;">$1,900</div><div class="t" style="right:409.3px;text-align:right;top:523.52px;font-size:21.33px;color:#17a317;font-weight:700;transform:scaleX(0.955);transform-origin:100% 0;">37%</div><div class="t" style="right:307px;text-align:right;top:450.82px;font-size:14.67px;color:#000000;font-weight:400;">$6,900</div><div class="t" style="right:307px;text-align:right;top:473.82px;font-size:14.67px;color:#000000;font-weight:400;">$3,200</div><div class="t" style="right:307px;text-align:right;top:496.84px;font-size:16px;color:#17a317;font-weight:700;">$3,700</div><div class="t" style="right:308.29999999999995px;text-align:right;top:523.52px;font-size:21.33px;color:#17a317;font-weight:700;transform:scaleX(0.955);transform-origin:100% 0;">54%</div><div class="t" style="right:206px;text-align:right;top:450.82px;font-size:14.67px;color:#000000;font-weight:400;">$8,700</div><div class="t" style="right:206px;text-align:right;top:473.82px;font-size:14.67px;color:#000000;font-weight:400;">$3,200</div><div class="t" style="right:206px;text-align:right;top:496.84px;font-size:16px;color:#17a317;font-weight:700;">$5,500</div><div class="t" style="right:207.29999999999995px;text-align:right;top:523.52px;font-size:21.33px;color:#17a317;font-weight:700;transform:scaleX(0.955);transform-origin:100% 0;">63%</div><div class="t" style="right:105px;text-align:right;top:450.82px;font-size:14.67px;color:#000000;font-weight:400;">$10,500</div><div class="t" style="right:105px;text-align:right;top:473.82px;font-size:14.67px;color:#000000;font-weight:400;">$3,200</div><div class="t" style="right:105px;text-align:right;top:496.84px;font-size:16px;color:#17a317;font-weight:700;">$7,300</div><div class="t" style="right:106.29999999999995px;text-align:right;top:523.52px;font-size:21.33px;color:#17a317;font-weight:700;transform:scaleX(0.955);transform-origin:100% 0;">70%</div><div class="t" style="right:610px;text-align:right;top:593.92px;font-size:14.67px;color:#000000;font-weight:700;text-decoration:underline;text-decoration-thickness:1.2px;text-underline-offset:0.9px;">What Is Your Time Worth?</div><div class="t" style="right:610.5px;text-align:right;top:616.32px;font-size:14.67px;color:#17a317;font-weight:700;">With Our Trailer: </div><div class="t" style="left:269px;top:616.32px;font-size:14.67px;color:#17a317;font-weight:700;">Just connect and go.  You&#39;re always ready.</div><div class="t" style="right:610.5px;text-align:right;top:639.32px;font-size:14.67px;color:#ff0000;font-weight:400;">With Storage: </div><div class="t" style="left:265.7px;top:639.32px;font-size:14.67px;color:#ff0000;font-weight:400;">You have to drive to storage and load up wasting time.</div><div style="left:50px;top:167px;width:708px;height:1px;background:#1a73e8;"></div><div style="left:50px;top:167px;width:1px;height:37px;background:#1a73e8;"></div><div style="left:757px;top:167px;width:2px;height:37px;background:#1a73e8;"></div><div style="left:50px;top:202px;width:709px;height:2px;background:#1a73e8;"></div><div style="left:754px;top:199px;width:10px;height:10px;background:#0b57d0;border-radius:50%;box-sizing:border-box;border:1px solid #fff;"></div>
</body></html>
